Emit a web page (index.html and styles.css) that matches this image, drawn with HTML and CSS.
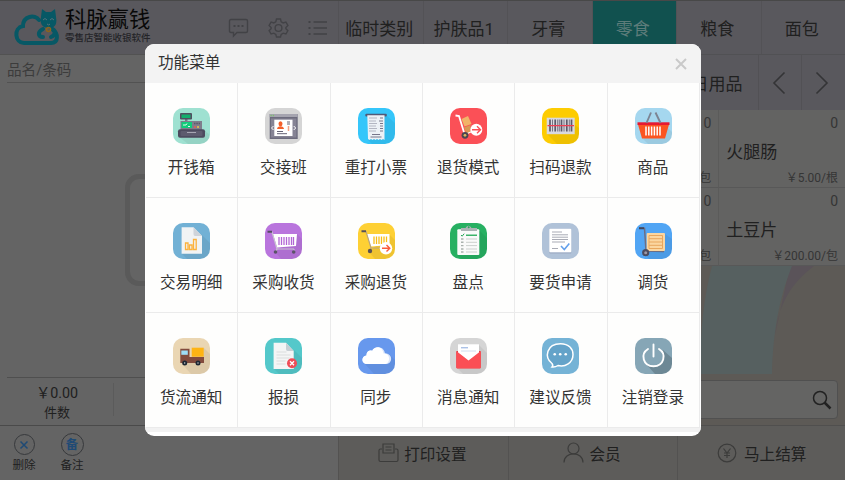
FILE: index.html
```html
<!DOCTYPE html>
<html lang="zh-CN">
<head>
    <meta charset="UTF-8">
    <title>科脉赢钱</title>
    <link rel="stylesheet" href="styles.css">
</head>
<body>
    <div class="page">
        <div class="left">
            <div class="header">
                <svg class="logo" width="46" height="40" viewBox="0 0 46 40">
                    <path d="M25 13C21 7 9 9 9 19C-1 21 1 36 10 36H37C45 36 44 26 39 23" fill="none" stroke="#075865" stroke-width="4" stroke-linecap="round"/>
                    <path d="M27 10L28 2L32 5H37L41 2L42 10C44 20 38 21 35 21C31 21 25 19 27 10Z" fill="#075865"/>
                    <path d="M29 22C23 25 24 30 29 30M37 21C42 23 42 28 37 30" fill="none" stroke="#075865" stroke-width="4" stroke-linecap="round"/>
                    <path d="M29 13q2-3 4 0M36 13q2-3 4 0M33 17q2 2 3 0" fill="none" stroke="#54717a" stroke-width="1"/>
                    <circle cx="34.500" cy="22.500" r="2" fill="none" stroke="#8b641c" stroke-width="1.600"/>
                </svg>
                <div class="brand">
                    <div class="brand-name">科脉赢钱</div>
                    <div class="brand-sub">零售店智能收银软件</div>
                </div>
                <div class="tools">
                    <svg width="21" height="20" viewBox="0 0 21 20"><path d="M3 1.500H18Q19.500 1.500 19.500 3V13Q19.500 14.500 18 14.500H9L5.500 18V14.500H3Q1.500 14.500 1.500 13V3Q1.500 1.500 3 1.500Z"/><path d="M5.500 8h2M9.500 8h2M13.500 8h2" stroke-width="2"/></svg>
                    <svg width="21" height="20" viewBox="0 0 21 20"><path d="M8.500 1h4l.7 2.800 2 1.100 2.700-.8 2 3.400-2 2v1.200l2 2-2 3.300-2.700-.8-2 1.200-.7 2.600h-4l-.7-2.600-2-1.200-2.700.8-2-3.300 2-2V9.500l-2-2 2-3.400 2.700.8 2-1.100Z"/><circle cx="10.500" cy="10" r="3.400"/></svg>
                    <svg width="21" height="20" viewBox="0 0 21 20"><path d="M1.500 4h2M1.500 10h2M1.500 16h2" stroke-width="2"/><path d="M6.500 4H20M6.500 10H20M6.500 16H20"/></svg>
                </div>
            </div>
            <div class="search-name">品名/条码</div>
            <div class="list"><div class="empty-box"></div></div>
            <div class="total">
                <div class="total-item">
                    <div class="total-num">￥0.00</div>
                    <div class="total-text">件数</div>
                </div>
            </div>
            <div class="left-foot">
                <div class="act"><span class="act-icon"><svg width="10" height="10" viewBox="0 0 10 10"><path d="M1.500 1.500L8.500 8.500M8.500 1.500L1.500 8.500" stroke="#1f4a75" stroke-width="1.500"/></svg></span>删除</div>
                <div class="act"><span class="act-icon act-icon-big">备</span>备注</div>
            </div>
        </div>

        <div class="right">
            <div class="tabs">
                <div class="tab">临时类别</div>
                <div class="tab">护肤品1</div>
                <div class="tab">牙膏</div>
                <div class="tab active">零食</div>
                <div class="tab">粮食</div>
                <div class="tab">面包</div>
            </div>
            <div class="sub-tabs">
                <div class="sub-tab">日用品</div>
                <div class="arrow"><svg width="14" height="24" viewBox="0 0 14 24"><path d="M12.500 1.500L2 12L12.500 22.500"/></svg></div>
                <div class="arrow"><svg width="14" height="24" viewBox="0 0 14 24"><path d="M1.500 1.500L12 12L1.500 22.500"/></svg></div>
            </div>
            <div class="goods">
                <div class="card"></div>
                <div class="card"></div>
                <div class="card"><span class="count">0</span><span class="name"></span><span class="price">包</span></div>
                <div class="card"><span class="count">0</span><span class="name">火腿肠</span><span class="price">￥5.00/根</span></div>
                <div class="card"></div>
                <div class="card"></div>
                <div class="card"><span class="count">0</span><span class="name"></span><span class="price">包</span></div>
                <div class="card"><span class="count">0</span><span class="name">土豆片</span><span class="price">￥200.00/包</span></div>
            </div>
            <div class="wall">
                <svg class="wall-bg" width="507" height="108" viewBox="338 266 507 108">
                    <path d="M790 266H814C790 284 779 305 775 335Z" fill="#5a5359"/>
                    <path d="M712 266H792C780 296 773 330 772 374H700C700 330 704 296 712 266Z" fill="#566060"/>
                </svg>
            </div>
            <div class="search-row">
                <div class="search-box">
                    <svg width="20" height="20" viewBox="0 0 20 20"><circle cx="8" cy="8" r="6.500" fill="none" stroke="#222" stroke-width="1.500"/><path d="M12.500 12.500L18.500 18.500" stroke="#222" stroke-width="2.500"/></svg>
                </div>
            </div>
            <div class="right-foot">
                <div class="foot-btn"><svg width="21" height="20" viewBox="0 0 21 20"><path d="M4 6H2.500Q1 6 1 7.500V17Q1 18.500 2.500 18.500H18.500Q20 18.500 20 17V7.500Q20 6 18.500 6H17M5 10V1H16V10ZM7.500 4H13.500M7.500 7H13.500"/></svg>打印设置</div>
                <div class="foot-btn"><svg width="21" height="21" viewBox="0 0 21 21"><circle cx="10.500" cy="6.500" r="5.500"/><path d="M1 20.500C1 9 20 9 20 20.500"/></svg>会员</div>
                <div class="foot-btn foot-pay"><svg width="20" height="20" viewBox="0 0 20 20"><circle cx="10" cy="10" r="8.800"/><path d="M6.500 5.500L10 10L13.500 5.500M10 10V15M7 10H13M7 12.500H13"/></svg>马上结算</div>
            </div>
        </div>
    </div>

    <div class="mask">
        <div class="dialog">
            <div class="dialog-head">
                <span>功能菜单</span>
                <svg width="12" height="12" viewBox="0 0 12 12"><path d="M1 1L11 11M11 1L1 11" stroke="#c9c9c9" stroke-width="2"/></svg>
            </div>
            <div class="menu">
                <div class="item">
                    <svg class="icon mint" viewBox="0 0 37 36">
                        <path class="shade" d="M31 22L37 27V36H15L6 29Z"/>
                        <path d="M12 11h2.500v4H12Z" fill="#777586"/>
                        <rect x="7" y="5" width="12" height="6.500" rx="1" fill="#514f60"/><rect x="8.500" y="6.500" width="9" height="3.500" fill="#12ae6d"/>
                        <rect x="7.500" y="13" width="21.500" height="9" fill="#7f7e8c"/><rect x="8.500" y="14" width="10.500" height="6" fill="#10cd7b"/>
                        <path d="M10 17h3l1-1.500M15 18.500h2" stroke="#dffbea" fill="none"/>
                        <path d="M21 15.500h6" stroke="#5a5869" stroke-width="1.500" stroke-dasharray="1.500 .8"/><path d="M21 19h2" stroke="#ed5b4e" stroke-width="1.500"/><path d="M24 19h2" stroke="#e8c74a" stroke-width="1.500"/>
                        <rect x="5" y="21.300" width="27" height="8.500" rx="2" fill="#4d4b5e"/><rect x="7.500" y="23" width="22" height="5" rx="1" fill="#5d5b6e"/><path d="M14 24.500h9" stroke="#a7a6b3"/>
                    </svg>
                    <span>开钱箱</span>
                </div>
                <div class="item">
                    <svg class="icon gray" viewBox="0 0 37 36">
                        <rect x="4.700" y="6" width="28" height="25" fill="#6c6b7d"/><rect x="4.700" y="6" width="28" height="3" fill="#a5a4af"/>
                        <path d="M5.500 7.500h4" stroke="#7dc06e" stroke-width="1.500" stroke-dasharray="1.300 1"/>
                        <rect x="6" y="10.500" width="25.400" height="19" fill="#858394"/>
                        <rect x="9.300" y="11.700" width="18.200" height="16.300" fill="#fff"/>
                        <path d="M8.500 18L6.500 20L8.500 22M28.700 18l2 2-2 2" stroke="#fff" fill="none"/>
                        <ellipse cx="15.500" cy="15.700" rx="2" ry="2.500" fill="#f4602b"/><path d="M12 21q.5-2.700 3.500-2.700T19 21Z" fill="#f4602b"/>
                        <path d="M12 23.500h6M12 25.700h10M22 14h3M22 16h3" stroke="#646274"/><path d="M23.500 18v5" stroke="#f2a283" stroke-width="1.500"/>
                    </svg>
                    <span>交接班</span>
                </div>
                <div class="item">
                    <svg class="icon sky" viewBox="0 0 37 36">
                        <path class="shade" d="M28 7L37 15V36H14L10 32Z"/>
                        <rect x="7.300" y="5.700" width="21.500" height="2.700" rx="1" fill="#515a78"/>
                        <path d="M9.300 7.300H26.500V32l-1.500-1-1.500 1-1.500-1-1.500 1-1.500-1-1.500 1-1.500-1-1.500 1-1.500-1-1.500 1-1.500-1Z" fill="#edf1f6"/>
                        <path d="M11 10h8M11 13h7M11 15.500h8M11 18h7M11 20.500h8M11 23h7" stroke="#b3b6c2"/><path d="M22 10h3M21 13h4M22 15.500h3M22 18h3M22 20.500h3M22 23h3M14 26.500h8M12.500 29h11" stroke="#77768a"/>
                    </svg>
                    <span>重打小票</span>
                </div>
                <div class="item">
                    <svg class="icon red" viewBox="0 0 37 36">
                        <path d="M11.500 11L18 8L21.500 16L14.500 18.500Z" fill="#f1b469"/><path d="M14 19.500L20.500 17V24L16.500 26Z" fill="#d99954"/>
                        <path d="M5.500 7.500L9 8L14.500 26" stroke="#fff" stroke-width="1.800" fill="none"/><path d="M15 26.500L22 23.500" stroke="#fff" stroke-width="1.300"/>
                        <circle cx="15" cy="27.300" r="3.400" fill="#4b4650"/><circle cx="15" cy="27.300" r="1.400" fill="#dcb35f"/>
                        <circle cx="26.300" cy="21.700" r="6" fill="#fff"/><path d="M22 21.700h8M27 18.200l3.500 3.500-3.500 3.500" stroke="#fa5057" stroke-width="1.400" fill="none"/>
                    </svg>
                    <span>退货模式</span>
                </div>
                <div class="item">
                    <svg class="icon yellow" viewBox="0 0 37 36">
                        <path class="shade" d="M33 17L37 20V36H15L5 26Z"/>
                        <rect x="4.700" y="9.700" width="28" height="16.500" fill="#d9d9df"/>
                        <path d="M8 11.500v12M13.200 11.500v12M19.500 11.500v12M24.800 11.500v12M29.500 11.500v12" stroke="#5b596a" stroke-width="1.700"/><path d="M10.500 11.500v12M15.700 11.500v12M17.300 11.500v12M22 11.500v12M27.300 11.500v12" stroke="#777586"/>
                        <path d="M5.500 17.700h26.500" stroke="#ef3f54" stroke-width="1.200"/>
                    </svg>
                    <span>扫码退款</span>
                </div>
                <div class="item">
                    <svg class="icon pale" viewBox="0 0 37 36">
                        <path class="shade" d="M32 19L37 24V36H13L8 31Z"/>
                        <path d="M3 16.500H34L30 30.500H7Z" fill="#fb5420"/><rect x="2.500" y="14.300" width="32" height="2.700" fill="#e71931"/>
                        <path d="M11.500 15L16 4.500M25.500 15L20.500 4.500" stroke="#7d8493" stroke-width="1.900"/>
                        <path d="M11 18.500v9M13.800 18.500v9M16.600 18.500v9M19.400 18.500v9M22.200 18.500v9M25 18.500v9" stroke="#fff" stroke-width="1.500"/>
                    </svg>
                    <span>商品</span>
                </div>

                <div class="item">
                    <svg class="icon blue" viewBox="0 0 37 36">
                        <path class="shade" d="M29 12L37 20V36H14L9 31Z"/>
                        <path d="M8.600 4.300H20.500L29 13V30.700H8.600Z" fill="#f1f3f4"/><path d="M20.500 4.300L29 13H22Q20.500 13 20.500 11Z" fill="#cfd4da"/>
                        <path d="M12.500 20h2.500v6.500h-2.500ZM16.500 22h2.500v4.500h-2.500ZM20.500 16.500h2.700v10h-2.700Z" fill="none" stroke="#fcb23d" stroke-width="1.300"/>
                    </svg>
                    <span>交易明细</span>
                </div>
                <div class="item">
                    <svg class="icon purple" viewBox="0 0 37 36">
                        <path class="shade" d="M32 11L37 16V36H16L10 29Z"/>
                        <path d="M8 11H32L31 23L12 24.500Z" fill="#fff"/>
                        <path d="M5 9H7L12 26H29M12 26L10.500 29M29 26V28" stroke="#c9c3d1" stroke-width="1.200" fill="none"/><path d="M2.500 8.800h4.500" stroke="#554d63" stroke-width="2"/>
                        <path d="M14 14v8M16.500 14v8M19 14v8M21.500 14v8M24 14v8M26.500 14v8M28.500 14v8" stroke="#b267d5" stroke-width="1.300"/>
                        <circle cx="10.500" cy="29" r="1.800" fill="#5b5269"/><circle cx="28.700" cy="29" r="1.800" fill="#5b5269"/>
                    </svg>
                    <span>采购收货</span>
                </div>
                <div class="item">
                    <svg class="icon gold" viewBox="0 0 37 36">
                        <path class="shade" d="M31 11L37 17V36H17L11 29Z"/>
                        <path d="M9 11H31.500V22L13 23.500Z" fill="#fff"/>
                        <path d="M6 8.500H8L13 25H24M13 25L12 28" stroke="#bba67d" stroke-width="1.200" fill="none"/><path d="M3.500 8.300h4.500" stroke="#57515b" stroke-width="2"/>
                        <path d="M16 13.500v7.500M18.500 13.500v7.500M21 13.500v7.500M23.500 13.500v7.500M26 13.500v7.500M28.500 13.500v7.500" stroke="#f7bd18" stroke-width="1.300"/>
                        <circle cx="12" cy="28" r="2.200" fill="#5c5252"/><circle cx="28" cy="25.300" r="6.200" fill="#fff"/>
                        <path d="M24 25.300h7.500M28.500 22l3.300 3.300-3.300 3.300" stroke="#fb5b3a" stroke-width="1.400" fill="none"/>
                    </svg>
                    <span>采购退货</span>
                </div>
                <div class="item">
                    <svg class="icon green" viewBox="0 0 37 36">
                        <path class="shade" d="M29 7L37 15V36H12L7 32Z"/>
                        <rect x="7.300" y="6.300" width="22" height="25.700" rx="1" fill="#fafafa"/><path d="M11 8V5H15.500Q18.500 .5 21.500 5H27V8Z" fill="#acb3b5"/><circle cx="18.700" cy="4.200" r="1" fill="#28a55a"/>
                        <path d="M16 12.300h11" stroke="#3db36a" stroke-width="1.400"/><path d="M11 12l1.200 1.200 2-2.500" stroke="#25a658" fill="none"/>
                        <path d="M11 16h2.500M11 19.300h2.500M11 22.600h2.500M11 26h2.500M11 29h2.500" stroke="#aab2ae" stroke-width="1.400"/><path d="M16 16h11M16 19.300h11M16 22.600h11M16 26h11M16 29h11" stroke="#ccd0ce"/>
                    </svg>
                    <span>盘点</span>
                </div>
                <div class="item">
                    <svg class="icon steel" viewBox="0 0 37 36">
                        <rect x="7.300" y="5.700" width="22" height="25" rx="1" fill="#a2b1c8"/><rect x="7.300" y="5.700" width="22" height="23.500" rx="1" fill="#fff"/>
                        <path d="M10 9h10M10 11.800h16M10 14.200h16M10 16.500h16M10 19h13M10 25.500h6" stroke="#a9abb5"/><path d="M19 23l3.300 3.500 5-6" fill="none" stroke="#64a0eb" stroke-width="1.600"/>
                    </svg>
                    <span>要货申请</span>
                </div>
                <div class="item">
                    <svg class="icon azure" viewBox="0 0 37 36">
                        <path class="shade" d="M30 11L37 16V36H14L9 31Z"/>
                        <path d="M4 5.300H9.500L11 28L29 28.500" fill="none" stroke="#6b6e85" stroke-width="1.500"/><path d="M4 5.200h5" stroke="#41465b" stroke-width="2"/>
                        <rect x="11.700" y="10" width="18.300" height="18" rx="1" fill="#fbd6a0"/>
                        <path d="M14 12.500H27.500V25.500H14ZM14 15.700h13.500M14 19h13.500M14 22.300h13.500" fill="none" stroke="#e8a75e"/>
                        <circle cx="10.700" cy="29.700" r="3.600" fill="#4d4c60"/><circle cx="10.700" cy="29.700" r="1.500" fill="#9c98a7"/>
                    </svg>
                    <span>调货</span>
                </div>

                <div class="item">
                    <svg class="icon sand" viewBox="0 0 37 36">
                        <path class="shade" d="M31 10L37 16V36H18L9 26Z"/>
                        <path d="M7.300 10.700H16.500V19H31V25H7.300Z" fill="#824b3d"/><rect x="18.700" y="9.700" width="12" height="9" fill="#feb414"/><rect x="8.300" y="12.500" width="6.500" height="4.300" fill="#9edcf5"/>
                        <circle cx="11.700" cy="25" r="2.500" fill="#1d2733"/><circle cx="25" cy="25" r="2.500" fill="#1d2733"/><circle cx="11.700" cy="25" r=".7" fill="#ddd"/><circle cx="25" cy="25" r=".7" fill="#ddd"/>
                    </svg>
                    <span>货流通知</span>
                </div>
                <div class="item">
                    <svg class="icon teal" viewBox="0 0 37 36">
                        <path class="shade" d="M29 12L37 20V36H14L9 31Z"/>
                        <path d="M8.600 4.700H21L28.700 13V31H8.600Z" fill="#f4f5f5"/><path d="M21 4.700L28.700 13H22.500Q21 13 21 11Z" fill="#c7cfd4"/>
                        <path d="M11.500 14h10M11.500 17h14M11.500 20h13M11.500 23h9M11.500 26h9" stroke="#dadddd"/>
                        <circle cx="27" cy="25.300" r="5" fill="#ef4d58"/><path d="M25 23.300l4 4M29 23.300l-4 4" stroke="#fff" stroke-width="1.300"/>
                    </svg>
                    <span>报损</span>
                </div>
                <div class="item">
                    <svg class="icon royal" viewBox="0 0 37 36">
                        <path class="shade" d="M31 16L37 22V36H16L6 25Z"/>
                        <path d="M9.500 26C3 26 3 18 8.500 17.500C8.500 12.500 13 12 14.500 13C17 7.500 26 8 27 15.500C35 15 35 26 28 26Z" fill="#dbe6fb"/>
                        <path d="M9 26C3 26 3 18 8.500 17.500C8.500 12.500 13 12 14 13C16.500 7.500 24.500 8 25.500 15.500C33 15 32.500 26 26.500 26Z" fill="#fff"/>
                    </svg>
                    <span>同步</span>
                </div>
                <div class="item">
                    <svg class="icon gray" viewBox="0 0 37 36">
                        <path class="shade" d="M29 7L37 15V36H13L7 30Z"/>
                        <rect x="6.300" y="13" width="24.500" height="17.300" rx="1" fill="#d74149"/><rect x="8" y="6.300" width="21" height="17" fill="#fff"/>
                        <path d="M11 9.800h7" stroke="#89a8dc"/><path d="M11 13h15" stroke="#d1deef"/><path d="M6.300 13L18.500 22.500L30.800 13V29.500Q30.800 30.500 29.800 30.500H7.300Q6.300 30.500 6.300 29.500Z" fill="#fb4e55"/>
                    </svg>
                    <span>消息通知</span>
                </div>
                <div class="item">
                    <svg class="icon blue-flat" viewBox="0 0 37 36">
                        <path d="M10 25.500C2 19 4.500 5.700 18.500 5.700C27 5.700 31 11 31 16.500C31 25 23 29.300 16 27.500Q13 29.500 10 29Q11.500 27.500 10 25.500Z" fill="#64a3c9" stroke="#fff" stroke-width="1.500"/>
                        <circle cx="12.700" cy="16.300" r="1.300" fill="#fff"/><circle cx="18.200" cy="16.300" r="1.300" fill="#fff"/><circle cx="23.700" cy="16.300" r="1.300" fill="#fff"/>
                    </svg>
                    <span>建议反馈</span>
                </div>
                <div class="item">
                    <svg class="icon slate" viewBox="0 0 37 36">
                        <path class="shade power-shade" d="M28 12L37 20V36H20L11 26Z"/>
                        <path class="power-fill" d="M18.500 9A9.500 9.500 0 1 1 18.400 9Z"/>
                        <path d="M13 11C5 16 8 28.200 18.500 28.200S32 16 24 11M18.500 6.500V18.500" fill="none" stroke="#fff" stroke-width="1.900" stroke-linecap="round"/>
                    </svg>
                    <span>注销登录</span>
                </div>
            </div>
            <div class="dialog-foot"></div>
        </div>
    </div>
</body>
</html>
```
FILE: styles.css
```css
* {
    box-sizing: border-box;
}
body {
    margin: 0;
    font-family: Roboto, "Noto Sans CJK SC", sans-serif;
    color: #202020;
    background: #5d5a56;
    overflow: hidden;
}
svg {
    display: block;
    flex: none;
}
.page {
    display: flex;
    width: 845px;
    height: 480px;
    border-top: 1px solid #484848;
}

/* 左侧购物清单 */
.left {
    width: 338px;
    display: flex;
    flex-direction: column;
    background: #646464;
}
.header {
    height: 54px;
    display: flex;
    align-items: center;
    padding: 0 10px 0 14px;
    background: #59585d;
    border-bottom: 1px solid #525252;
}
.logo {
    margin-top: -2px;
}
.brand {
    width: 100px;
    margin-left: 5px;
    color: #080808;
    white-space: nowrap;
}
.brand-name {
    font-size: 21.3px;
    line-height: 24px;
    margin-top: -4px;
}
.brand-sub {
    font-size: 9.5px;
    font-weight: 500;
    line-height: 11px;
    color: #242428;
}
.tools {
    display: flex;
    gap: 18.5px;
    margin-left: auto;
}
.tools svg {
    fill: none;
    stroke: #424246;
    stroke-width: 1.4;
}
.search-name {
    height: 28px;
    margin-left: 7px;
    border-bottom: 1px solid #525252;
    font-size: 14.6px;
    line-height: 30px;
    color: #3c3c3c;
}
.list {
    flex: 1;
    display: flex;
    align-items: center;
    justify-content: center;
}
.empty-box {
    width: 88px;
    height: 112px;
    border: 5px solid #5a5a5a;
    border-radius: 14px;
}
.total {
    height: 48px;
    margin-left: 7px;
    padding-top: 5px;
    border-top: 1px solid #4f4f4f;
}
.total-item {
    width: 107px;
    height: 33px;
    border-right: 1px solid #5b5b5b;
    text-align: center;
    padding-right: 6px;
}
.total-num {
    font-size: 14.3px;
    line-height: 20px;
}
.total-text {
    font-size: 13px;
    line-height: 20px;
}
.left-foot {
    height: 55px;
    display: flex;
    border-top: 1px solid #4a4a4a;
    padding-top: 7px;
}
.act {
    width: 48px;
    display: flex;
    flex-direction: column;
    align-items: center;
    font-size: 11.6px;
    line-height: 18px;
}
.act-icon {
    width: 21px;
    height: 21px;
    margin: 1px 0;
    display: flex;
    align-items: center;
    justify-content: center;
    border: 1px solid #37393c;
    border-radius: 50%;
}
.act-icon-big {
    width: 23px;
    height: 23px;
    margin: 0;
    font-size: 12.5px;
    font-weight: bold;
    color: #1f4a75;
}

/* 右侧商品区 */
.right {
    width: 507px;
    display: flex;
    flex-direction: column;
}
.tabs {
    height: 54px;
    display: flex;
    background: #59585d;
    border-bottom: 1px solid #515154;
}
.tab {
    flex: 1;
    display: flex;
    align-items: center;
    justify-content: center;
    padding-right: 3px;
    border-left: 1px solid #535256;
    font-size: 17px;
    white-space: nowrap;
}
.tab.active {
    background: #11514f;
    color: #5d7c7a;
}
.sub-tabs {
    height: 55px;
    display: flex;
    justify-content: flex-end;
    padding-right: 1px;
    background: #59585d;
}
.sub-tab {
    width: 84px;
    display: flex;
    align-items: center;
    justify-content: center;
    padding-left: 2px;
    font-size: 17px;
}
.arrow {
    width: 43px;
    display: flex;
    align-items: center;
    justify-content: center;
    border-left: 1px solid #525155;
}
.arrow svg {
    margin-right: 2px;
    fill: none;
    stroke: #343436;
    stroke-width: 1.6;
}
.goods {
    display: grid;
    grid-template-columns: repeat(4, 1fr);
    grid-auto-rows: 78px;
}
.card {
    display: flex;
    flex-direction: column;
    padding: 4px 7px 0;
    border-left: 1px solid #5b5b5a;
    border-bottom: 1px solid #585858;
    background: #636362;
}
.count, .price {
    text-align: right;
    color: #353535;
}
.count {
    font-size: 14px;
    line-height: 18px;
}
.name {
    flex: 1;
    display: flex;
    align-items: center;
    font-size: 17px;
}
.price {
    font-size: 12px;
    line-height: 18px;
}
.wall {
    height: 108px;
}
.search-row {
    flex: 1;
    padding: 6px 7px 6px;
}
.search-box {
    height: 39px;
    display: flex;
    align-items: center;
    justify-content: flex-end;
    padding-right: 5px;
    border: 1px solid #505050;
    border-radius: 4px;
    background: #646463;
}
.right-foot {
    height: 55px;
    display: flex;
    border-top: 1px solid #504f4e;
    background: #5d5c5a;
}
.foot-btn {
    flex: 1;
    display: flex;
    align-items: center;
    justify-content: center;
    gap: 5px;
    padding-right: 2px;
    padding-bottom: 1px;
    border-left: 1px solid #535251;
    font-size: 15.6px;
}
.foot-pay {
    gap: 7px;
    padding-right: 0;
}
.foot-btn svg {
    fill: none;
    stroke: #3c3c3b;
    stroke-width: 1.2;
}

/* 功能菜单弹窗 */
.mask {
    position: absolute;
    top: 0;
    left: 0;
    width: 845px;
    height: 480px;
    padding: 44px 0 0 145px;
}
.dialog {
    width: 556px;
    height: 392px;
    border-radius: 9px;
    background: #fff;
    overflow: hidden;
}
.dialog-head {
    height: 39px;
    display: flex;
    align-items: center;
    justify-content: space-between;
    padding: 0 14px 0 13px;
    background: #f3f3f3;
    font-size: 15.6px;
    line-height: 22px;
    color: #333;
}
.dialog-head span {
    margin-top: -2px;
}
.menu {
    display: grid;
    grid-template-columns: repeat(6, 1fr);
    grid-auto-rows: 115px;
    width: 555px;
    padding-left: 1px;
}
.item {
    display: flex;
    flex-direction: column;
    align-items: center;
    padding-top: 25px;
    border-right: 1px solid #ebebeb;
    border-bottom: 1px solid #ebebeb;
    background: #fefefd;
    font-size: 15.6px;
    line-height: 22px;
    color: #333;
}
.item span {
    margin-top: 13px;
    padding-right: 1px;
}
.dialog-foot {
    height: 4px;
    background: #f2f2f2;
}
.icon {
    width: 37px;
    height: 36px;
    border-radius: 10px;
}
.shade {
    fill: #000;
    opacity: .06;
}
.power-shade {
    opacity: .18;
}
.power-fill {
    fill: #86a6b6;
}
.mint { background: #9fe1d1; }
.gray { background: #d5d5d5; }
.sky { background: #35c6fa; }
.red { background: #fb5057; }
.yellow { background: #fdcc02; }
.pale { background: #a5d7ef; }
.blue { background: #72b1d5; }
.blue-flat { background: #75b3d6; }
.purple { background: #b975dd; }
.gold { background: #fed034; }
.green { background: #27b062; }
.steel { background: #b0c2d8; }
.azure { background: #51a5f4; }
.sand { background: #ead6b3; }
.teal { background: #54c8ca; }
.royal { background: #6798ed; }
.slate { background: #86a6b6; }
```
